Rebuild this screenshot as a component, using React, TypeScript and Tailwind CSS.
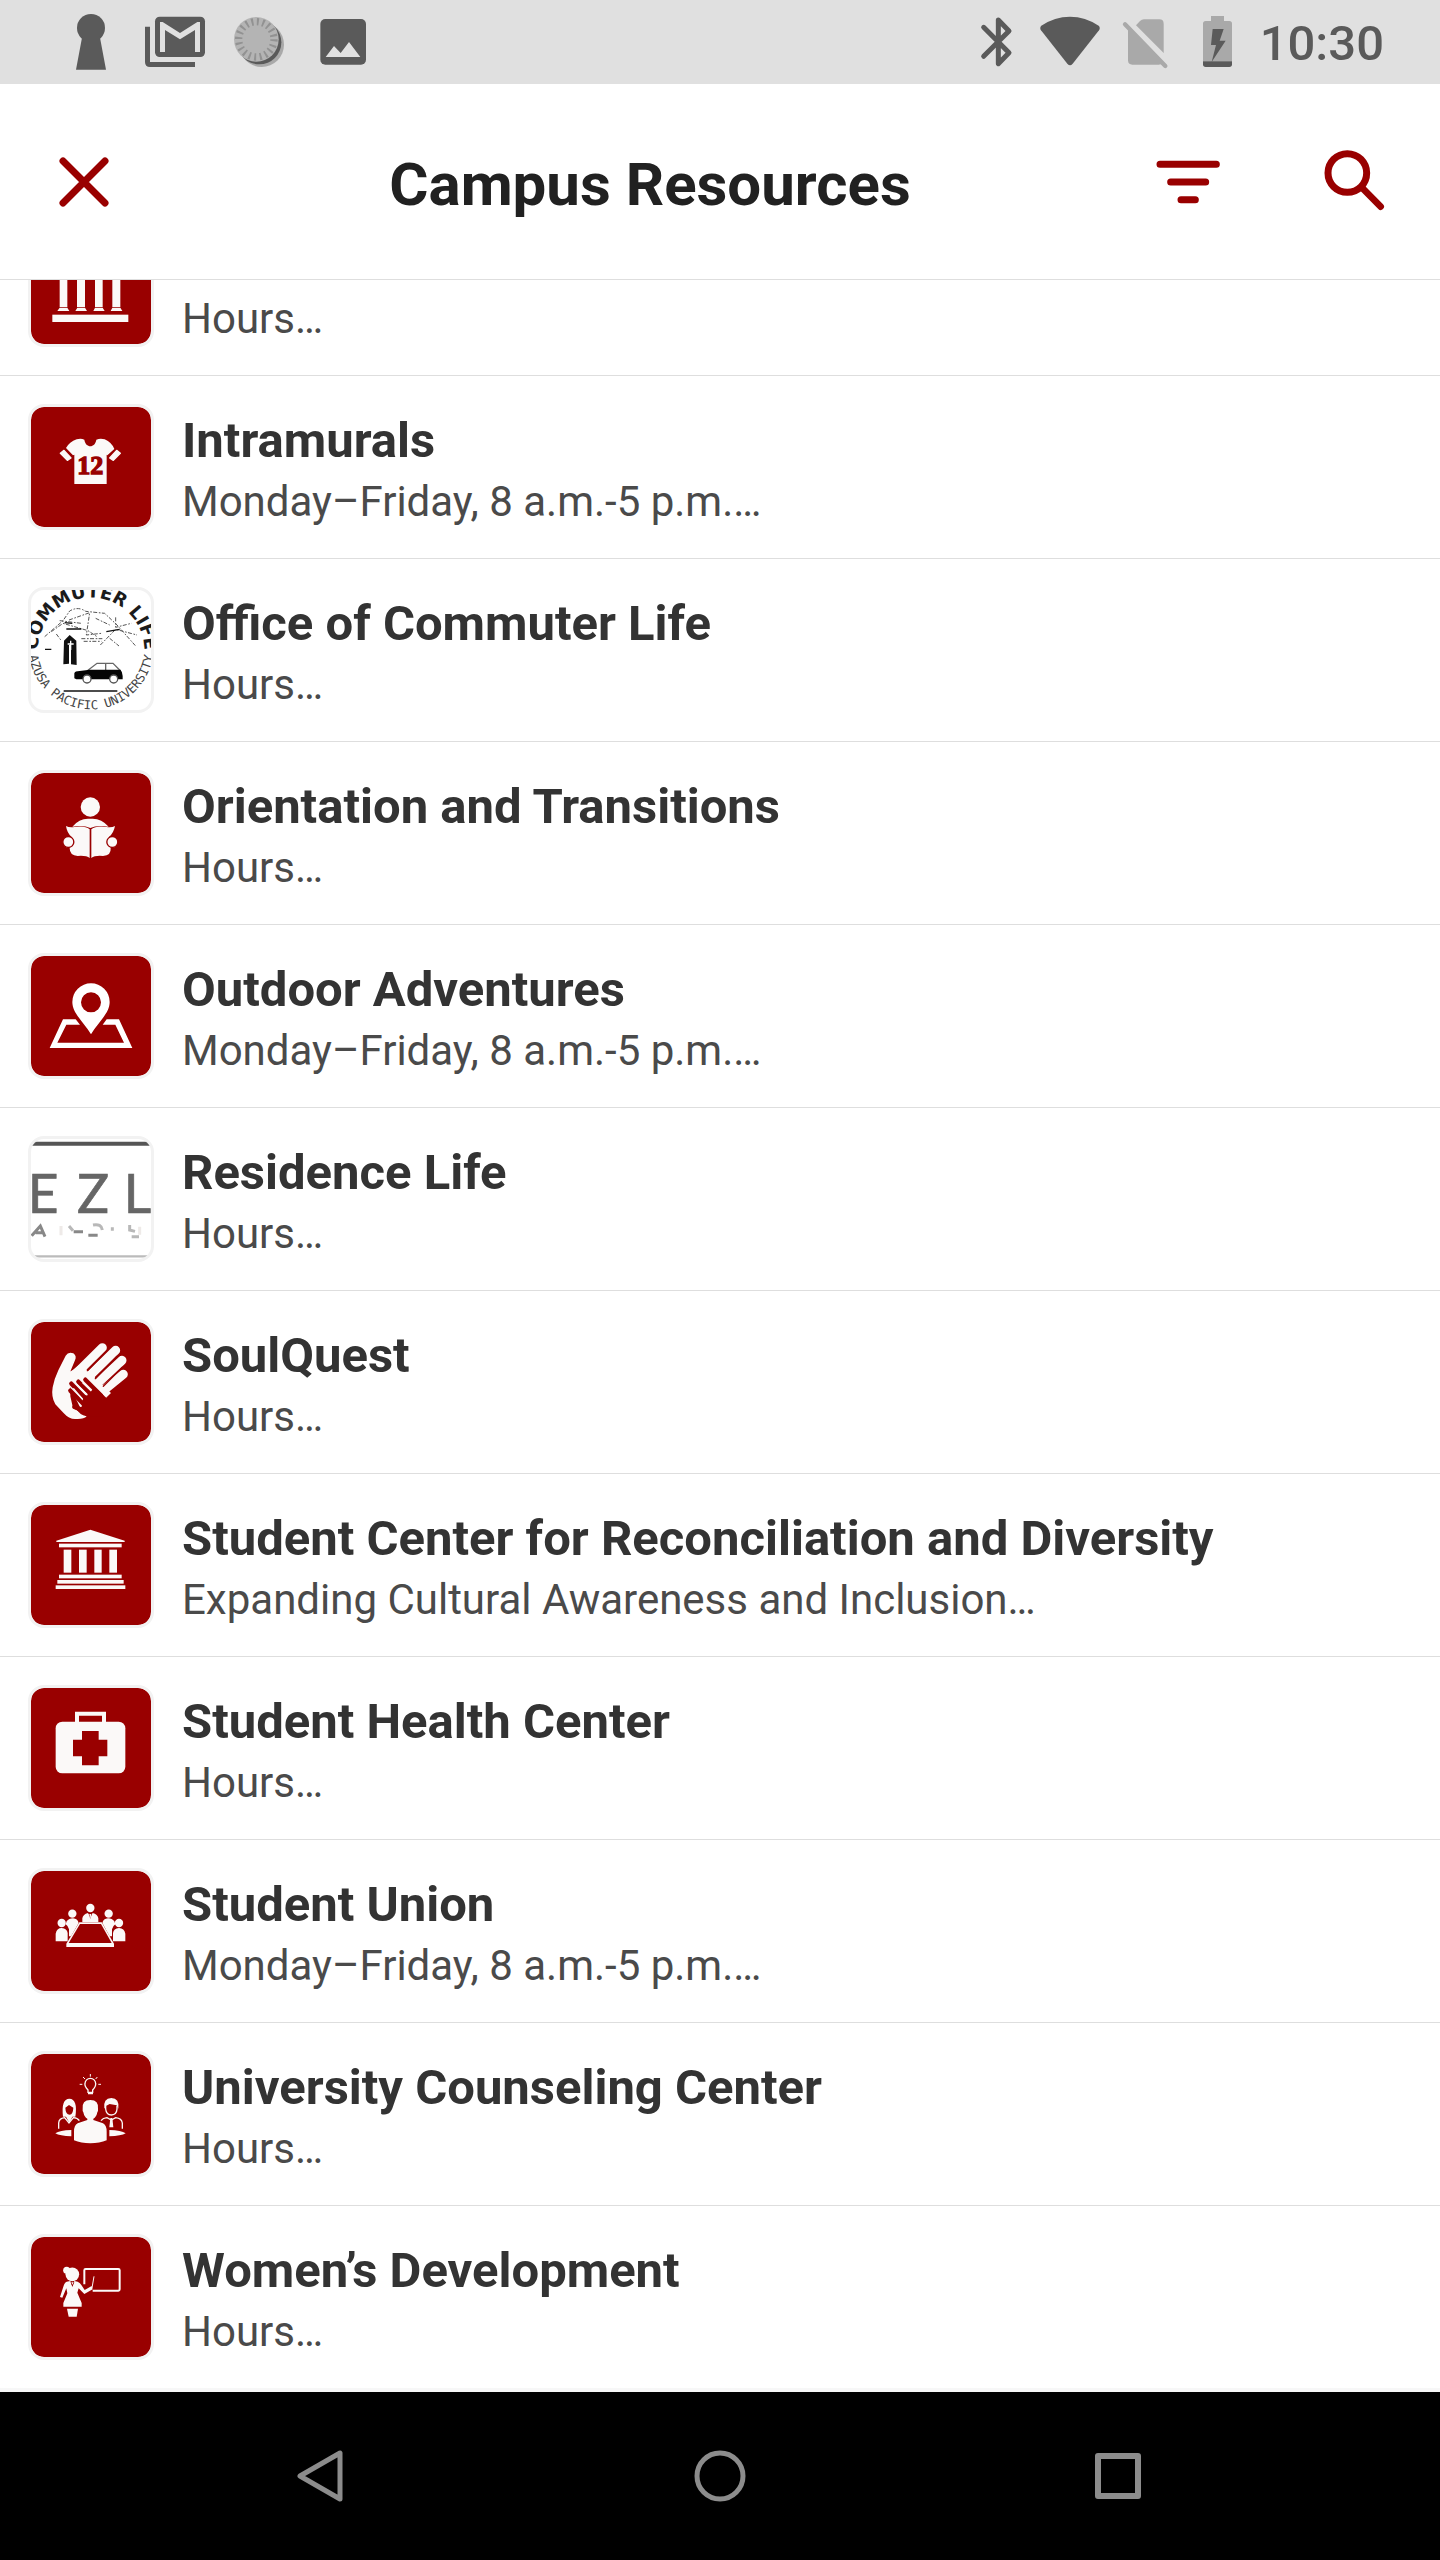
import type { ReactNode } from 'react';

const RED = '#990000';
const PAPER = '#fbf9f8';
const DARK = '#5a5a5a';
const PALE = '#a9a9a9';

/* ---------- status bar ---------- */

function StatusBar() {
  return (
    <div className="flex h-[84px] items-center justify-between bg-[#e0e0e0] pr-14 pl-[49px]">
      <div className="flex">
        <svg viewBox="147 0 252 252" className="size-[84px]" fill={DARK} aria-hidden="true">
          <circle cx="273" cy="84" r="42" />
          <path d="M247 108H299L318 209H228Z" />
        </svg>
        <svg viewBox="399 0 252 252" className="size-[84px]" aria-hidden="true">
          <path d="M442.500 80V186q0 7.500 7.500 7.500H585" fill="none" stroke={DARK} strokeWidth="15" />
          <rect x="465" y="50" width="150" height="121" rx="14" fill={DARK} />
          <path d="M480 156V66h8L540 99 592 66h8V156H585V90L540 118 495 90V156Z" fill="#e0e0e0" />
        </svg>
        <svg viewBox="651 0 252 252" className="size-[84px]" aria-hidden="true">
          <circle cx="785" cy="134" r="67" fill={PALE} />
          <circle cx="778" cy="127" r="66" fill={DARK} />
          <circle cx="769" cy="118" r="67" fill="#b4b4b4" />
          <circle cx="769" cy="118" r="53" fill="none" stroke="#929292" strokeWidth="22" strokeDasharray="6 10.650" />
        </svg>
        <svg viewBox="903 0 252 252" className="size-[84px]" aria-hidden="true">
          <rect x="961" y="57" width="137" height="137" rx="15" fill={DARK} />
          <path d="M977 171 1002 138 1022 159 1047 126 1081 171Z" fill="#e0e0e0" />
        </svg>
      </div>
      <div className="flex items-center">
        <svg viewBox="180 0 222 252" className="h-[84px] w-[74px]" fill="none" stroke={DARK} strokeWidth="15" strokeLinecap="round" strokeLinejoin="round" aria-hidden="true">
          <path d="M251 82 327 158 295 191V60L327 93 251 169" />
        </svg>
        <svg viewBox="402 0 222 252" className="h-[84px] w-[74px]" fill={DARK} aria-hidden="true">
          <path d="M424 77Q464 50 510 50T596 77Q602 83 597 91L518 191Q510 201 502 191L423 91Q418 83 424 77Z" />
        </svg>
        <svg viewBox="624 0 222 252" className="h-[84px] w-[74px]" aria-hidden="true">
          <path d="M708 76 720 63Q725 58 732 58H778Q791 58 791 71V159Z" fill={PALE} />
          <path d="M684 86V181Q684 194 697 194H776L785 192Z" fill={PALE} />
          <path d="M675 73 796 198" stroke={PALE} strokeWidth="13" strokeLinecap="round" />
        </svg>
        <svg viewBox="846 0 222 252" className="h-[84px] w-[74px]" aria-hidden="true">
          <path d="M933 48H972V63H988Q996 63 996 71V184H909V71Q909 63 917 63H933Z" fill={PALE} />
          <path d="M909 184H996V193Q996 201 988 201H917Q909 201 909 193Z" fill={DARK} />
          <path d="M938 87H971L959 122H977L935 186 948 135H933Z" fill={DARK} />
        </svg>
        <time className="pt-1 pl-1 text-[49px] leading-[60px] font-medium text-[#5a5a5a]">10:30</time>
      </div>
    </div>
  );
}

/* ---------- tile artwork ---------- */

const hall = (
  <svg viewBox="94 671 360 360" fill={PAPER} className="block size-full">
    <rect x="180" y="740" width="23" height="180" />
    <rect x="232" y="740" width="24" height="180" />
    <rect x="286" y="740" width="23" height="180" />
    <rect x="338" y="740" width="24" height="180" />
    <path d="M180 922h23l6 10h-36ZM233 922h23l6 10h-35ZM286 922h23l6 10h-34ZM338 922h24l6 10h-35Z" />
    <rect x="158" y="943" width="228" height="22" />
  </svg>
);

const jersey = (
  <svg viewBox="94 82 360 360" className="block size-full">
    <path d="M231 179Q244 175 254 180C258 206 286 206 290 180Q302 175 315 179Q336 188 344 208L323 227 321 225V313H224V225L220 227 199 205Q209 187 231 179Z" fill={PAPER} />
    <path d="M193 212 214 235 203 242 182 221ZM351 212 330 235 341 242 362 221Z" fill={PAPER} stroke={PAPER} strokeWidth="4" strokeLinejoin="round" />
    <text x="272" y="283" textAnchor="middle" fontFamily="Liberation Serif, serif" fontWeight="700" fontSize="78" fill={RED} stroke={RED} strokeWidth="4">12</text>
  </svg>
);

const commuter = (
  <svg viewBox="64 60 360 360" className="block size-full">
    <defs>
      <path id="arc-top" d="M88 278A160 160 0 1 1 400 278" />
      <path id="arc-bottom" d="M56 230A188 188 0 0 0 432 230" />
    </defs>
    <text fontFamily="DejaVu Sans, sans-serif" fontWeight="700" fontSize="54" fill="#1b1b1b" textAnchor="middle">
      <textPath href="#arc-top" startOffset="50%">COMMUTER LIFE</textPath>
    </text>
    <text fontFamily="DejaVu Sans Mono, monospace" fontSize="37" fill="#444" textAnchor="middle">
      <textPath href="#arc-bottom" startOffset="50%">AZUSA PACIFIC UNIVERSITY</textPath>
    </text>
    <g fill="none" stroke="#555" strokeWidth="3" strokeDasharray="12 5 5 4">
      <path d="M105 200 160 152 180 123Q205 108 228 124L285 130 322 165 378 228" />
      <path d="M125 185 160 160 235 182 262 200M150 152 215 160M178 150 240 128 230 195 275 190M258 145 300 165" />
      <path d="M272 225 318 178 382 195M318 142V172L365 160M215 206H278M222 214H275M300 205 328 228M140 192 155 212" />
    </g>
    <path d="M165 158 188 160M170 177H215M290 185 330 178M106 238H125" stroke="#111" strokeWidth="4" />
    <path d="M161 283 163 212 180 195 200 212 201 285 184 283V225H178V281Z" fill="#111" />
    <path d="M174 222H192M183 212V240" stroke="#fff" strokeWidth="4" />
    <path d="M232 303 262 280H310L333 303M288 280V303" fill="none" stroke="#666" strokeWidth="4" />
    <path d="M194 325V310Q196 303 210 303L240 299H332Q339 305 339 318V328H200Z" fill="#050505" />
    <g fill="#fff" stroke="#555" strokeWidth="4">
      <circle cx="232" cy="327" r="12" />
      <circle cx="312" cy="327" r="12" />
    </g>
    <path d="M162 363H323" stroke="#111" strokeWidth="4" />
  </svg>
);

const reader = (
  <svg viewBox="64 70 360 360" className="block size-full">
    <circle cx="242" cy="172" r="29" fill={PAPER} />
    <path d="M188 231Q208 207 235 207H249Q276 207 297 231Q262 225 242 235Q222 225 188 231Z" fill={PAPER} />
    <path d="M169 229Q179 235 195 232Q225 227 240 239V325Q230 317 204 319Q180 318 180 296L186 262Q172 250 169 229Z" fill={PAPER} />
    <path d="M316 229Q306 235 290 232Q260 227 245 239V325Q255 317 280 319Q305 318 303 296L298 262Q312 250 316 229Z" fill={PAPER} />
    <circle cx="176" cy="277" r="16.500" fill={PAPER} stroke={RED} strokeWidth="4" />
    <circle cx="308" cy="277" r="16.500" fill={PAPER} stroke={RED} strokeWidth="4" />
  </svg>
);

const mapPin = (
  <svg viewBox="64 79 360 360" className="block size-full">
    <path d="M160 269H198L211 285H170L143 339H343L317 285H279L291 269H328L368 355H120Z" fill="#fff" />
    <path fillRule="evenodd" d="M244 161A56 56 0 0 1 300 217C300 251 266 277 244 314C222 277 188 251 188 217A56 56 0 0 1 244 161ZM244 188A30 30 0 1 0 244 248A30 30 0 1 0 244 188Z" fill="#fff" />
  </svg>
);

const residence = (
  <svg viewBox="64 57 360 360" className="block size-full">
    <path d="M64 71H424" stroke="#555" strokeWidth="12" />
    <path d="M64 409H424" stroke="#bbb" strokeWidth="7" />
    <g fontFamily="Lato, sans-serif" fontSize="160" fill="#666" stroke="#666" strokeWidth="2">
      <text x="54" y="280">E</text>
      <text x="202" y="280">Z</text>
      <text x="342" y="280">L</text>
    </g>
    <g fill="none" strokeWidth="9" className="blur-[1px]">
      <path d="M66 347 92 318 106 350M78 338H102M192 335H220M236 346H264" stroke="#888" />
      <path d="M178 318 190 332M250 315Q275 310 278 330M360 315V330L376 334M366 350H388M308 322V332" stroke="#b8b8b8" />
      <path d="M154 318V346M390 320V344" stroke="#eeeae8" />
    </g>
  </svg>
);

const hands = (
  <svg viewBox="64 67 360 360" className="block size-full">
    <g fill="none" stroke={PAPER} strokeWidth="27" strokeLinecap="round">
      <path d="M200 221 278 144M226 242 318 152M249 264 337 182M272 280 341 224" />
    </g>
    <path d="M168 168Q176 155 191 161Q202 169 196 182L181 218 208 196 232 212 304 280 291 293 233 234 182 240V290L190 325 215 340 231 350Q222 360 196 358Q178 358 161 339L137 314Q124 292 129 263Q134 237 146 212Z" fill={PAPER} />
    <path d="M175 218 220 200 285 262 291 293 265 320 215 330 180 260Z" fill={PAPER} />
    <path d="M233 213 290 155M257 237 322 170M281 260 338 203" stroke={RED} strokeWidth="4" strokeLinecap="round" />
    <g stroke={RED} strokeWidth="13" strokeLinecap="round">
      <path d="M182 273 228 320M185 252 232 300M206 246 248 288M227 240 275 288M194 322 228 334" />
    </g>
    <path d="M222 290 236 282 255 262 293 297 280 350 231 350Q208 344 200 327L216 321Z" fill={RED} />
    <path d="M191 266 218 298M199 252 233 287M219 249 245 274" stroke={PAPER} strokeWidth="4" />
  </svg>
);

const temple = (
  <svg viewBox="64 616 360 360" fill={PAPER} className="block size-full">
    <path d="M242 690 345 723V727H140V723Z" />
    <rect x="148" y="732" width="188" height="11" />
    <rect x="162" y="750" width="23" height="69" />
    <rect x="208" y="750" width="23" height="69" />
    <rect x="254" y="750" width="22" height="69" />
    <rect x="299" y="750" width="23" height="69" />
    <rect x="148" y="825" width="188" height="11" />
    <rect x="143" y="841" width="199" height="11" />
    <rect x="138" y="857" width="209" height="11" />
  </svg>
);

const medical = (
  <svg viewBox="64 55 360 360" className="block size-full">
    <path d="M202 165V132H283V165" fill="none" stroke={PAPER} strokeWidth="12" />
    <rect x="138" y="156" width="209" height="155" rx="20" fill={PAPER} />
    <path d="M217 184H267V210H293V260H267V287H217V260H190V210H217Z" fill={RED} />
  </svg>
);

const meeting = (
  <svg viewBox="64 604 360 360" className="block size-full">
    <g fill={PAPER}>
      <circle cx="242" cy="715" r="12.500" />
      <path d="M218 757V746Q220 734 235 730L242 742 249 730Q264 734 266 746V757Z" />
      <circle cx="188" cy="732" r="12.500" />
      <circle cx="297" cy="732" r="12.500" />
      <path d="M171 755Q178 746 190 746Q204 747 207 760L184 800H178V779Q176 769 168 764ZM314 755Q307 746 295 746Q281 747 278 760L300 800H307V779Q309 769 317 764Z" />
      <circle cx="156" cy="760" r="12.500" />
      <circle cx="328" cy="760" r="12.500" />
      <path d="M138 815V792Q141 775 156 775Q172 776 174 790V815ZM310 815V790Q312 776 328 775Q344 776 347 792V815Z" />
    </g>
    <path d="M237 730H247L242 748Z" fill={RED} />
    <path d="M239 733H245L242 748Z" fill={PAPER} />
    <path d="M209 758H276L313 822V832H170V822Z" fill={PAPER} />
    <path d="M211 763H274L306 820H177Z" fill={RED} />
  </svg>
);

const counseling = (
  <svg viewBox="64 43 360 360" className="block size-full">
    <g fill="none" stroke={PAPER} strokeWidth="4">
      <path d="M235 158V151Q224 139 226 132A16 16 0 0 1 258 132Q259 140 249 151V158Z" />
      <path d="M242 103V111M220 112 226 118M263 112 258 118M210 134H218M266 134H274" strokeWidth="3" />
      <path d="M147 267V250Q148 236 165 234L178 250 191 234Q204 235 209 243M274 243Q280 235 292 234L305 241 318 234Q336 236 338 250V267" />
      <path d="M288 198V208Q290 226 305 226Q321 225 322 208V198" />
    </g>
    <path d="M235 159H250V164H235Z" fill={PAPER} />
    <path fillRule="evenodd" d="M160 231Q154 177 179 177Q205 178 197 231L188 231 179 249 169 231ZM167 204Q168 225 180 225Q190 224 191 204L178 196Z" fill={PAPER} />
    <path d="M284 207Q280 175 305 175Q330 175 326 207L321 197 300 193 290 198Z" fill={PAPER} />
    <path d="M302 235H308L311 263H299Z" fill={PAPER} />
    <path d="M219 208Q216 181 242 181Q268 181 265 208Q266 215 263 218Q260 233 251 237V241L280 251Q291 256 291 276V302Q270 311 242 311T193 302V276Q193 256 204 251L233 241V237Q224 233 221 218Q218 215 219 208Z" fill={PAPER} />
    <path d="M137 281Q150 272 185 271V290Q150 289 137 281ZM348 281Q335 272 299 271V290Q335 289 348 281Z" fill={PAPER} />
  </svg>
);

const teacher = (
  <svg viewBox="64 592 360 360" className="block size-full">
    <path d="M224 734V692Q224 688 228 688H326Q330 688 330 692V749Q330 753 326 753H249" fill="none" stroke={PAPER} strokeWidth="6" />
    <path d="M247 745 253 710" stroke={PAPER} strokeWidth="3" />
    <g fill={PAPER}>
      <circle cx="188" cy="704" r="20.500" />
      <circle cx="171" cy="692" r="10.500" />
      <path d="M171 726 182 724 188 740 194 724 204 726Q212 730 215 736L225 751 246 739 249 749 224 763 207 746 203 759 216 790V801H161V790L173 761 170 746 158 774 151 772 163 735Q166 728 171 726Z" />
      <path d="M172 807H205L201 831H177Z" />
    </g>
    <path d="M183 727H194L188 742Z" fill={RED} />
    <path d="M185 728H192L188 735Z" fill={PAPER} />
  </svg>
);

/* ---------- list ---------- */

type Resource = { title: string; note: string; art: ReactNode; plain?: boolean };

const HOURS = 'Hours…';
const WEEKDAYS = 'Monday–Friday, 8 a.m.-5 p.m.…';

const resources: Resource[] = [
  { title: 'Intramurals', note: WEEKDAYS, art: jersey },
  { title: 'Office of Commuter Life', note: HOURS, art: commuter, plain: true },
  { title: 'Orientation and Transitions', note: HOURS, art: reader },
  { title: 'Outdoor Adventures', note: WEEKDAYS, art: mapPin },
  { title: 'Residence Life', note: HOURS, art: residence, plain: true },
  { title: 'SoulQuest', note: HOURS, art: hands },
  { title: 'Student Center for Reconciliation and Diversity', note: 'Expanding Cultural Awareness and Inclusion…', art: temple },
  { title: 'Student Health Center', note: HOURS, art: medical },
  { title: 'Student Union', note: WEEKDAYS, art: meeting },
  { title: 'University Counseling Center', note: HOURS, art: counseling },
  { title: 'Women’s Development', note: HOURS, art: teacher },
];

function Tile({ art, plain }: { art: ReactNode; plain?: boolean }) {
  return (
    <div
      aria-hidden="true"
      className={
        'size-[126px] shrink-0 overflow-hidden rounded-2xl border-3 border-[#f2f2f2] bg-clip-padding ' +
        (plain ? 'bg-white' : 'bg-[#990000]')
      }
    >
      {art}
    </div>
  );
}

function Row({ title, note, art, plain }: Partial<Resource>) {
  return (
    <a href="#resource" className="flex items-start gap-7 bg-white px-7">
      <div className="py-7">
        <Tile art={art} plain={plain} />
      </div>
      <div className="min-w-0 pt-8">
        {title ? (
          <h2 className="truncate text-[49px] leading-[66px] font-bold text-[#333]">{title}</h2>
        ) : (
          <div className="h-[66px]" />
        )}
        <p className="truncate text-[42px] leading-[56px] text-[#4a4a4a]">{note}</p>
      </div>
    </a>
  );
}

export default function App() {
  return (
    <div className="flex min-h-screen flex-col bg-white font-['Roboto',sans-serif]">
      <StatusBar />
      <header className="flex h-[196px] items-center border-b border-[#dedede] bg-white">
        <button type="button" aria-label="Close" className="mr-7 flex h-full w-[168px] items-center justify-center">
          <svg viewBox="0 0 150 150" className="size-[50px]" stroke={RED} strokeWidth="21" strokeLinecap="round">
            <path d="M12 12 138 138M138 12 12 138" />
          </svg>
        </button>
        <h1 className="flex-1 pt-1.5 text-center text-[60px] leading-[72px] font-bold text-[#212121]">Campus Resources</h1>
        <button type="button" aria-label="Filter" className="flex h-full w-[168px] items-center justify-center">
          <svg viewBox="768 450 192 192" className="size-16" stroke={RED} strokeWidth="21" strokeLinecap="round">
            <path d="M780 493H949M812 546H917M843 599H886" />
          </svg>
        </button>
        <button type="button" aria-label="Search" className="mr-1 flex h-full w-[164px] items-center justify-center">
          <svg viewBox="1266 450 192 192" className="size-16" stroke={RED} fill="none" strokeLinecap="round">
            <circle cx="1342" cy="519" r="58" strokeWidth="21" />
            <path d="M1388 565 1442 620" strokeWidth="20" />
          </svg>
        </button>
      </header>
      <main className="flex-1 bg-[#f7f7f7]">
        <div className="flex h-24 flex-col justify-end overflow-hidden border-b border-[#dedede]">
          <Row note={HOURS} art={hall} />
        </div>
        <ul className="divide-y divide-[#dedede]">
          {resources.map((r) => (
            <li key={r.title}>
              <Row {...r} />
            </li>
          ))}
        </ul>
      </main>
      <nav className="flex h-[168px] justify-center bg-black">
        <div className="grid w-[83%] grid-cols-3 place-items-center">
          <button type="button" aria-label="Back">
            <svg viewBox="0 0 52 52" className="size-[52px]" fill="none" stroke="#8c8c8c" strokeWidth="5" strokeLinejoin="round">
              <path d="M44 3V49L4 26Z" />
            </svg>
          </button>
          <button type="button" aria-label="Home">
            <svg viewBox="0 0 52 52" className="size-[52px]" fill="none" stroke="#8c8c8c" strokeWidth="5">
              <circle cx="26" cy="26" r="23" />
            </svg>
          </button>
          <button type="button" aria-label="Recent apps">
            <svg viewBox="0 0 52 52" className="size-[52px]" fill="none" stroke="#8c8c8c" strokeWidth="6" strokeLinejoin="round">
              <path d="M6 6H46V46H6Z" />
            </svg>
          </button>
        </div>
      </nav>
    </div>
  );
}
